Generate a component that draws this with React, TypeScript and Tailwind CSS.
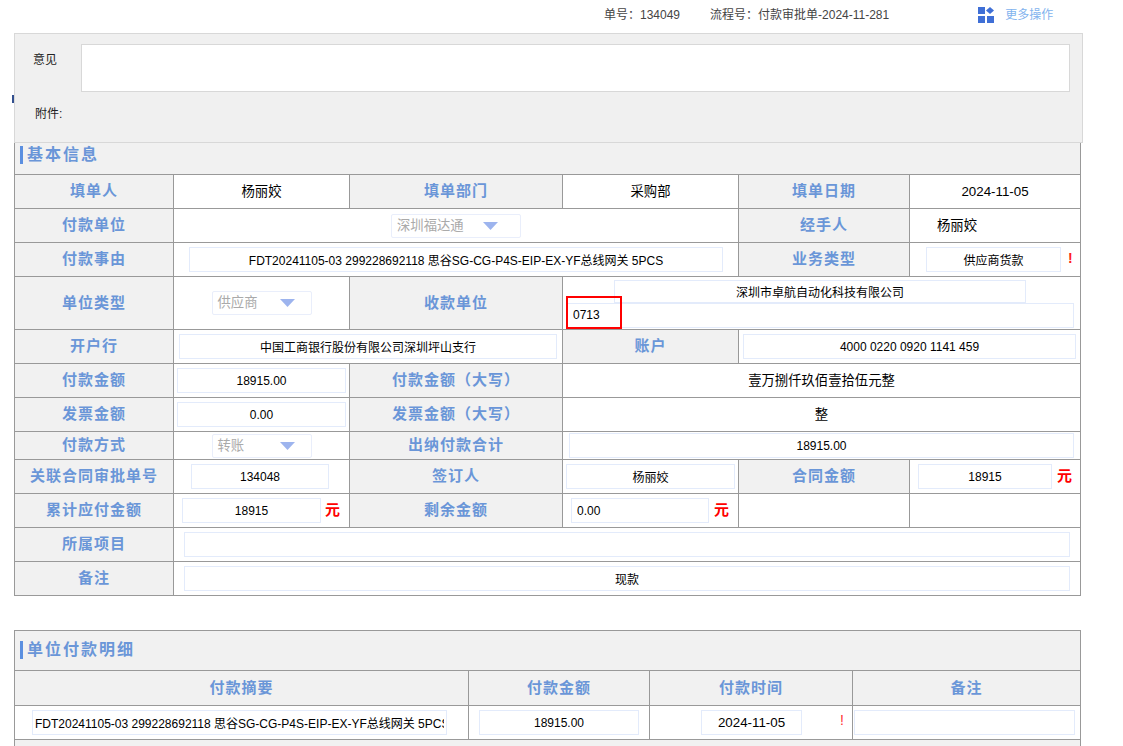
import React from "react";

const LABEL = "border border-[#999] bg-[#f1f1f1] text-center align-middle p-0 text-[15px] font-bold tracking-[1px] text-[#6a96d8]";
const VALUE = "border border-[#999] bg-white text-center align-middle p-0 text-[13.33px] text-black";
const INPUT = "block h-[25px] shrink-0 border border-[#e3ebfb] bg-white text-center text-[12px] text-black outline-none";

function Field({ w, value = "", left = false }: { w: string; value?: string; left?: boolean }) {
  return <input readOnly value={value} className={`${INPUT} ${w} ${left ? "text-left pl-[5px]" : "pl-[1px] pr-[1px]"}`} />;
}

function Select({ w, pr, value }: { w: string; pr: string; value: string }) {
  return (
    <div className={`flex h-[24px] ${w} ${pr} items-center justify-between rounded-[2px] border border-[#e9eefb] pl-[5px] text-[13.33px] text-[#aaaaaa]`}>
      <span>{value}</span>
      <svg width="15" height="8" viewBox="0 0 15 8"><path d="M0 0h15L7.5 8z" fill="#9db4ee" /></svg>
    </div>
  );
}

function Yuan() {
  return <span className="text-[15px] font-bold text-[#ff0000]">元</span>;
}

function Title({ text, h, pb }: { text: string; h: string; pb: string }) {
  return (
    <div className={`flex ${h} ${pb} items-center border-x border-[#999] bg-[#f1f1f1] pl-[5px] text-[16px] font-bold tracking-[2px] text-[#6a96d8]`}>
      <span className="mr-[4px] h-[18px] w-[3px] bg-[#5b8fe0]" />
      {text}
    </div>
  );
}

export default function App() {
  return (
    <div className="relative h-[746px] w-[1123px] overflow-hidden bg-white font-['Liberation_Sans','Noto_Sans_CJK_SC',sans-serif]">
      {/* top bar */}
      <div className="flex h-[33px] items-start pt-[7px] text-[12px] text-[#444]">
        <span className="ml-[604px] leading-[16px]">单号：134049</span>
        <span className="ml-[30px] leading-[16px]">流程号：付款审批单-2024-11-281</span>
        <svg className="ml-[89px]" width="16" height="16" viewBox="0 0 16 16" fill="#3f6fd6">
          <rect x="0" y="0" width="7" height="7" />
          <path d="M12 0l4 3.5-4 3.5-4-3.5z" />
          <rect x="0" y="9" width="7" height="7" />
          <rect x="9" y="9" width="7" height="7" />
        </svg>
        <span className="ml-[11px] leading-[16px] text-[#82b3ee]">更多操作</span>
      </div>

      {/* opinion panel */}
      <div className="relative ml-[14px] h-[110px] w-[1069px] border border-[#d8d8d8] bg-[#f0f0f0]">
        <span className="absolute left-[-3px] top-[61px] h-[8px] w-[2px] bg-[#33508f]" />
        <div className="flex pt-[10px]">
          <span className="ml-[18px] w-[48px] pt-[8px] text-[12px] leading-[16px] text-[#222]">意见</span>
          <div className="h-[48px] w-[989px] border border-[#d8d8d8] bg-white" />
        </div>
        <div className="ml-[20px] mt-[14px] text-[12px] leading-[16px] text-[#222]">附件:</div>
      </div>

      {/* basic info */}
      <div className="ml-[14px] w-[1067px]">
        <Title text="基本信息" h="h-[31px]" pb="pb-[8px]" />
        <table className="w-[1066px] table-fixed border-collapse">
          <colgroup>
            <col className="w-[159px]" />
            <col className="w-[176px]" />
            <col className="w-[213px]" />
            <col className="w-[176px]" />
            <col className="w-[171px]" />
            <col className="w-[171px]" />
          </colgroup>
          <tbody>
            <tr className="h-[34px]">
              <td className={LABEL}>填单人</td>
              <td className={VALUE}>杨丽姣</td>
              <td className={LABEL}>填单部门</td>
              <td className={VALUE}>采购部</td>
              <td className={LABEL}>填单日期</td>
              <td className={VALUE}>2024-11-05</td>
            </tr>
            <tr className="h-[34px]">
              <td className={LABEL}>付款单位</td>
              <td className={VALUE} colSpan={3}>
                <div className="flex justify-center"><Select w="w-[130px]" pr="pr-[22px]" value="深圳福达通" /></div>
              </td>
              <td className={LABEL}>经手人</td>
              <td className={`${VALUE} pl-[27px] text-left`}>杨丽姣</td>
            </tr>
            <tr className="h-[34px]">
              <td className={LABEL}>付款事由</td>
              <td className={VALUE} colSpan={3}>
                <div className="flex justify-center"><Field w="w-[534px]" value="FDT20241105-03 299228692118 思谷SG-CG-P4S-EIP-EX-YF总线网关 5PCS" /></div>
              </td>
              <td className={LABEL}>业务类型</td>
              <td className={VALUE}>
                <div className="flex items-center pl-[16px]">
                  <Field w="w-[135px]" value="供应商货款" />
                  <span className="mb-[2px] ml-[7px] text-[14px] font-bold text-[#ff2020]">!</span>
                </div>
              </td>
            </tr>
            <tr className="h-[53px]">
              <td className={LABEL}>单位类型</td>
              <td className={VALUE}>
                <div className="flex justify-center"><Select w="w-[100px]" pr="pr-[16px]" value="供应商" /></div>
              </td>
              <td className={LABEL}>收款单位</td>
              <td className={VALUE} colSpan={3}>
                <div className="relative flex flex-col pl-[4px] pt-[1px]">
                  <input readOnly value="深圳市卓航自动化科技有限公司" className="ml-[47px] block h-[23px] w-[412px] border border-[#e3ebfb] text-center text-[12px] text-black outline-none" />
                  <Field w="w-[507px]" value="0713" left />
                  <div className="absolute left-[3px] top-[17px] h-[33px] w-[56px] border-2 border-[#ff0000]" />
                </div>
              </td>
            </tr>
            <tr className="h-[34px]">
              <td className={LABEL}>开户行</td>
              <td className={VALUE} colSpan={2}>
                <div className="flex pl-[5px]"><Field w="w-[378px]" value="中国工商银行股份有限公司深圳坪山支行" /></div>
              </td>
              <td className={LABEL}>账户</td>
              <td className={VALUE} colSpan={2}>
                <div className="flex pl-[4px]"><Field w="w-[333px]" value="4000 0220 0920 1141 459" /></div>
              </td>
            </tr>
            <tr className="h-[34px]">
              <td className={LABEL}>付款金额</td>
              <td className={VALUE}>
                <div className="flex pl-[3px]"><Field w="w-[169px]" value="18915.00" /></div>
              </td>
              <td className={LABEL}>付款金额（大写）</td>
              <td className={VALUE} colSpan={3}>壹万捌仟玖佰壹拾伍元整</td>
            </tr>
            <tr className="h-[34px]">
              <td className={LABEL}>发票金额</td>
              <td className={VALUE}>
                <div className="flex pl-[3px]"><Field w="w-[169px]" value="0.00" /></div>
              </td>
              <td className={LABEL}>发票金额（大写）</td>
              <td className={VALUE} colSpan={3}>整</td>
            </tr>
            <tr className="h-[28px]">
              <td className={LABEL}>付款方式</td>
              <td className={VALUE}>
                <div className="flex justify-center"><Select w="w-[100px]" pr="pr-[16px]" value="转账" /></div>
              </td>
              <td className={LABEL}>出纳付款合计</td>
              <td className={VALUE} colSpan={3}>
                <div className="flex pl-[6px]"><Field w="w-[505px]" value="18915.00" /></div>
              </td>
            </tr>
            <tr className="h-[34px]">
              <td className={LABEL}>关联合同审批单号</td>
              <td className={VALUE}>
                <div className="flex pl-[17px]"><Field w="w-[138px]" value="134048" /></div>
              </td>
              <td className={LABEL}>签订人</td>
              <td className={VALUE}>
                <div className="flex pl-[3px]"><Field w="w-[169px]" value="杨丽姣" /></div>
              </td>
              <td className={LABEL}>合同金额</td>
              <td className={VALUE}>
                <div className="flex items-center pl-[8px]">
                  <Field w="w-[134px]" value="18915" />
                  <span className="ml-[5px]"><Yuan /></span>
                </div>
              </td>
            </tr>
            <tr className="h-[34px]">
              <td className={LABEL}>累计应付金额</td>
              <td className={VALUE}>
                <div className="flex items-center pl-[8px]">
                  <Field w="w-[139px]" value="18915" />
                  <span className="ml-[4px]"><Yuan /></span>
                </div>
              </td>
              <td className={LABEL}>剩余金额</td>
              <td className={VALUE}>
                <div className="flex items-center pl-[8px]">
                  <Field w="w-[138px]" value="0.00" left />
                  <span className="ml-[5px]"><Yuan /></span>
                </div>
              </td>
              <td className={VALUE} />
              <td className={VALUE} />
            </tr>
            <tr className="h-[34px]">
              <td className={LABEL}>所属项目</td>
              <td className={VALUE} colSpan={5}>
                <div className="flex pl-[10px]"><Field w="w-[886px]" /></div>
              </td>
            </tr>
            <tr className="h-[34px]">
              <td className={LABEL}>备注</td>
              <td className={VALUE} colSpan={5}>
                <div className="flex pl-[10px]"><Field w="w-[886px]" value="现款" /></div>
              </td>
            </tr>
          </tbody>
        </table>
      </div>

      {/* detail */}
      <div className="ml-[14px] mt-[34px] w-[1067px] border-t border-[#999]">
        <Title text="单位付款明细" h="h-[39px]" pb="pb-[2px]" />
        <table className="w-[1066px] table-fixed border-collapse">
          <colgroup>
            <col className="w-[454px]" />
            <col className="w-[181px]" />
            <col className="w-[203px]" />
            <col className="w-[228px]" />
          </colgroup>
          <tbody>
            <tr className="h-[35px]">
              <td className={LABEL}>付款摘要</td>
              <td className={LABEL}>付款金额</td>
              <td className={LABEL}>付款时间</td>
              <td className={LABEL}>备注</td>
            </tr>
            <tr className="h-[34px]">
              <td className={VALUE}>
                <div className="flex pl-[17px]">
                  <input readOnly value="FDT20241105-03 299228692118 思谷SG-CG-P4S-EIP-EX-YF总线网关 5PCS" className={`${INPUT} w-[415px] pl-[2px] pr-[2px] text-left`} />
                </div>
              </td>
              <td className={VALUE}>
                <div className="flex pl-[10px]"><Field w="w-[160px]" value="18915.00" /></div>
              </td>
              <td className={VALUE}>
                <div className="flex items-center pl-[51px]">
                  <input readOnly value="2024-11-05" className={`${INPUT} w-[101px] text-[13.33px]`} />
                  <span className="mb-[4px] ml-[38px] text-[14px] text-[#ff3030]">!</span>
                </div>
              </td>
              <td className={VALUE}>
                <div className="flex pl-[1px]"><Field w="w-[221px]" /></div>
              </td>
            </tr>
          </tbody>
        </table>
        <div className="h-[10px] border-x border-[#999] bg-[#f1f1f1]" />
      </div>
    </div>
  );
}
